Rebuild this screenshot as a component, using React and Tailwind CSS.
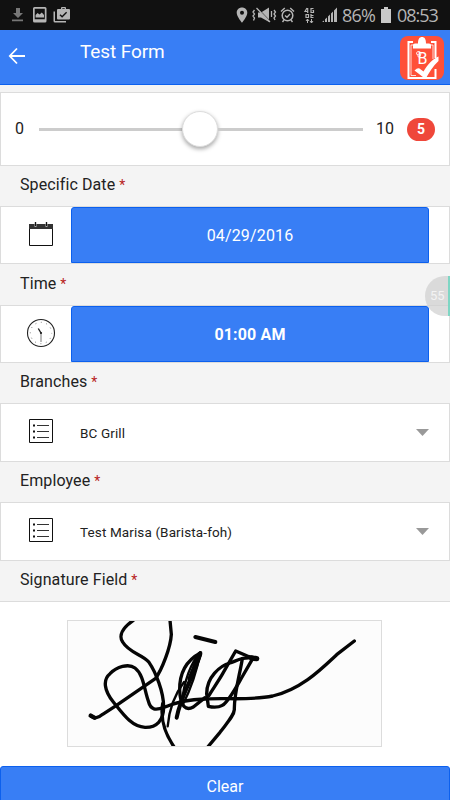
// src/App.jsx
import { useState } from "react";

function StatusBar() {
  return (
    <div className="flex h-[30px] items-center bg-[#111111] pl-3 pr-[10px] text-[#b5b5b5]">
      <svg width="60" height="16" viewBox="0 0 60 16" fill="currentColor">
        <path d="M4 1h4v5h3L6 11L1 6h3z M0 12.5h11v1.700H0z" fill="#777" />
        <path fillRule="evenodd" d="M22.500 0h10.500q1.500 0 1.500 1.500v12.500q0 1.500-1.500 1.500h-10.500q-1.500 0-1.500-1.500v-12.500q0-1.500 1.500-1.500z M22.700 1.700v10.600h10.100v-10.600z" />
        <path d="M23.600 10.500V8l2-2 2 1.500 2.200-2 2.200 2.500v2.500z" />
        <path d="M43 4.500v9.500h11v1.500h-11q-1.500 0-1.500-1.500v-9.500z" />
        <path fillRule="evenodd" d="M49 2V1q0-1 1-1h3q1 0 1 1v1h3q1 0 1 1v8.500q0 1-1 1h-11q-1 0-1-1V3q0-1 1-1z M50.300 1.300v.7h2.400v-.7z M48.500 7.200l-1 1 2.600 2.500 5-5-1-1-4 4z" />
      </svg>
      <svg className="ml-auto" width="106" height="18" viewBox="0 0 106 18" fill="none" stroke="currentColor">
        <path fill="currentColor" stroke="none" fillRule="evenodd" d="M6 1.500c3 0 5.300 2.200 5.300 5.200 0 3.800-5.300 10-5.300 10S.7 10.500.7 6.700C.7 3.700 3 1.500 6 1.500z M6 4.700a2 2 0 1 0 0 4 2 2 0 0 0 0-4z" />
        <path fill="currentColor" stroke="none" d="M22 6.500h3l8-5v14.500l-8-4.500h-3z" />
        <path stroke="#111111" strokeWidth="1.200" d="M22 3l13 13.500" />
        <path strokeWidth="1.300" d="M20.500 2l13.500 14M18.500 4l-1.500 2 1.500 2-1.500 2 1.500 2-1 2.500M35.500 5v6M38 4l1.500 2-1.500 2 1.500 2-1.500 2 1 2" />
        <circle cx="51.500" cy="9.500" r="5.300" strokeWidth="1.500" />
        <path strokeWidth="1.400" d="M45 5.500l3.800-3.600M54.200 1.900l3.800 3.600M49 9.500l2 1.800 3-3.200M48 14l-1.500 2M55 14l1.500 2" />
        <path strokeWidth="1.200" d="M71 2l-2 3.500h3M71.700 2v5M77.500 2.500h-2.500v4h2.500v-2h-1M70 8v3.500h3M75 8v3.500h2.500M75 9.500h2.500M70 8.500h2.500v3" />
        <path strokeWidth="1" d="M71.500 13v4M70 15l1.500-2 1.500 2M75.500 13v4M74 15l1.500 2 1.500-2" />
        <path fill="currentColor" stroke="none" d="M86 16L88 14.500V16z M89 13.200l2-1.700V16h-2z M92 10.500l2-2V16h-2z M95 7.500l2-2V16h-2z M98 4.500l3-3V16h-3z" />
      </svg>
      <span className="w-[37px] whitespace-nowrap font-['Open_Sans',sans-serif] text-[18px] tracking-[-0.8px]">86%</span>
      <svg className="ml-[2px] mr-[6px]" width="10" height="16" viewBox="0 0 10 16" fill="#c8c8c8">
        <path d="M3 0h4v2h3v14H0V2h3z" />
      </svg>
      <span className="w-[43px] whitespace-nowrap font-['Open_Sans',sans-serif] text-[18px] tracking-[-1px]">08:53</span>
    </div>
  );
}

function AppLogo() {
  return (
    <svg width="44" height="44" viewBox="0 0 44 44">
      <rect width="44" height="44" rx="8" fill="#ff5038" />
      <path d="M13 6H8.500v36H35.500V33M31 6h4.500v16" fill="none" stroke="#fff" strokeWidth="2" />
      <path d="M14 9h-3v30.500h5M30 9h3v14" fill="none" stroke="#fff" strokeWidth=".8" />
      <path d="M13 12.500V9q0-1.500 2-1.500h3C18 3 19.500 1 22 1s4 2 4 6.500h3q2 0 2 1.500v3.500z" fill="#fff" />
      <text x="17.500" y="28" fill="#fff" fontSize="16" fontFamily="Roboto, sans-serif">B</text>
      <path d="M19 19q-3 0-2.500-2t3-1.500 1 4-3 0" fill="none" stroke="#fff" strokeWidth=".9" />
      <path d="M14.500 34.500q3-3 5-2l4 3C28 28 33 22.500 38.500 20.500V25C33 30 29 36.500 25.500 43z" fill="#fff" />
    </svg>
  );
}

function CalendarIcon() {
  return (
    <svg width="26" height="26" viewBox="0 0 26 26">
      <path d="M1.500 3.500h23v21h-23z" fill="none" stroke="#111" />
      <path d="M1 3h24v5H1z" fill="#333" />
      <path d="M7.500 1v5M18.500 1v5" stroke="#aaa" strokeWidth="2" />
      <path d="M7.500 1v4M18.500 1v4" stroke="#111" />
    </svg>
  );
}

function ClockIcon() {
  return (
    <svg width="30" height="30" viewBox="0 0 30 30" fill="none" stroke="#222">
      <circle cx="15" cy="15" r="13.500" strokeWidth="1.100" />
      <circle cx="15" cy="15" r="10.700" stroke="#777" strokeWidth="1" strokeDasharray="1 4.602" strokeDashoffset=".5" />
      <path d="M15 15l-2.700-4.500" strokeWidth="1.400" />
      <path d="M15 15v9" stroke="#777" />
      <circle cx="15" cy="15" r=".7" fill="#222" />
    </svg>
  );
}

function ListIcon() {
  return (
    <svg width="26" height="26" viewBox="0 0 26 26" stroke="#111" fill="none">
      <path d="M1.500 1.500h23v23h-23z" />
      <path d="M9 7.500h12M9 13.500h12M9 19.500h12" stroke="#333" />
      <path d="M5 7.500h2M5 13.500h2M5 19.500h2" strokeWidth="2" />
    </svg>
  );
}

function Signature() {
  return (
    <svg width="313" height="126" viewBox="24 32 939 378" fill="none" stroke="#050505" strokeWidth="10" strokeLinecap="round" strokeLinejoin="round">
      <path d="M220 30C188 52 175 76 188 95C207 128 250 133 267 156C287 185 311 245 311 290C311 330 290 352 255 351C215 350 188 310 160 275C132 240 128 208 150 190C170 170 205 158 225 173C251 193 252 235 265 272C272 300 287 300 313 291C345 277 390 267 435 266C500 262 570 271 638 257C725 236 785 175 830 133L883 92" />
      <path d="M92 315C102 327 115 323 128 312L165 288L286 205C306 178 332 110 334 72L330 30" />
      <path d="M92 316L103 322" strokeWidth="13" />
      <path d="M308 280C298 340 325 385 345 414" />
      <path d="M440 414L480 366C505 333 522 315 523 298C522 250 540 190 547 145" />
      <path d="M406 80L466 95" strokeWidth="12" />
      {/* letter i */}
      <path d="M421 128C380 150 358 190 359 240C361 290 378 302 400 290L435 262" />
      <path d="M323 348C328 290 344 252 372 215" strokeWidth="7" />
      <path d="M421 128C405 195 365 245 350 322" strokeWidth="12" />
      <path d="M420 130C392 155 372 215 366 275M420 130C410 185 390 240 368 284" strokeWidth="7" />
      <path d="M419 132L390 205" strokeWidth="15" />
      {/* last letter */}
      <path d="M590 145C545 136 526 154 510 158C480 166 440 200 440 250L445 288C466 293 478 290 487 285C505 276 532 224 548 197L575 150" />
      <path d="M447 255C458 237 473 215 485 195L527 122L562 137L590 145" />
      <path d="M575 143L590 145" strokeWidth="16" />
    </svg>
  );
}

function FieldLabel({ children }) {
  return (
    <div className="flex h-[40px] items-center bg-[#f4f4f4] pb-[2px] pl-5 text-[16px] tracking-[0.1px] text-[#222]">
      {children}
      <span className="ml-[4px] text-[14px] text-[#b81d22]">*</span>
    </div>
  );
}

function SelectRow({ value }) {
  return (
    <div className="flex h-[59px] items-center border border-[#dcdcdc] bg-white pl-[27px] pr-5">
      <div className="mb-[3px]"><ListIcon /></div>
      <span className="ml-[26px] mt-[1px] text-[13.5px] tracking-[0.12px] text-[#222]">{value}</span>
      <svg className="ml-auto" width="13" height="7" viewBox="0 0 13 7">
        <path d="M0 0h13L6.500 7z" fill="#999" />
      </svg>
    </div>
  );
}

function PickerRow({ icon, children }) {
  return (
    <div className="flex h-[58px] border border-[#dcdcdc] bg-white pr-5">
      <div className="flex w-[70px] items-center justify-center pb-[3px] pl-[9px]">{icon}</div>
      <button className="flex-1 rounded-t-[3px] border border-[#0c60ee] bg-[#387ef5] pt-[2px] text-[16px] tracking-[0.15px] text-white">{children}</button>
    </div>
  );
}

export default function App() {
  const [value] = useState(5);
  const [date] = useState("04/29/2016");
  const [time] = useState("01:00 AM");

  return (
    <div className="relative h-[800px] w-[450px] overflow-hidden bg-[#f4f4f4] font-['Roboto',sans-serif]">
      <StatusBar />

      <header className="flex h-[55px] border-b border-[#0c60ee] bg-[#387ef5] text-white">
        <svg className="ml-2 mt-[17px]" width="18" height="18" viewBox="0 0 18 18" fill="none" stroke="#fff" strokeWidth="1.800">
          <path d="M9 1.500L1.800 9L9 16.500M1.800 9H17" />
        </svg>
        <h1 className="ml-[54px] mt-[8px] text-[19px] leading-7 tracking-[-0.1px]">Test Form</h1>
        <div className="ml-auto mr-[6px] mt-[6px]"><AppLogo /></div>
      </header>

      {/* Slider */}
      <div className="mt-[7px] flex h-[74px] items-center border border-[#dcdcdc] bg-white text-[16px] text-[#222]">
        <span className="ml-[14px] w-[24px]">0</span>
        <div className="flex h-[36px] w-[324px] items-center">
          <div className="h-[3px] w-[143px] bg-[#ccc]" />
          <div className="h-[36px] w-[36px] rounded-full border border-[#ddd] bg-white shadow-[0_2px_4px_rgba(0,0,0,0.35)]" />
          <div className="h-[3px] flex-1 bg-[#ccc]" />
        </div>
        <span className="ml-[13px] w-[31px]">10</span>
        <span className="flex h-[23px] w-[28px] items-center justify-center rounded-full bg-[#ef473a] text-[14px] font-bold text-white">{value}</span>
      </div>

      <FieldLabel>Specific Date</FieldLabel>
      <PickerRow icon={<CalendarIcon />}>{date}</PickerRow>

      <div className="pt-px">
        <FieldLabel>Time</FieldLabel>
      </div>
      <PickerRow icon={<ClockIcon />}><b>{time}</b></PickerRow>

      <FieldLabel>Branches</FieldLabel>
      <SelectRow value="BC Grill" />

      <FieldLabel>Employee</FieldLabel>
      <SelectRow value="Test Marisa (Barista-foh)" />

      <FieldLabel>Signature Field</FieldLabel>

      {/* Signature pad */}
      <div className="h-[200px] border-t border-[#dcdcdc] bg-white">
        <div className="ml-[67px] mt-[18px] h-[127px] w-[315px] overflow-hidden border border-[#dcdcdc] bg-[#fcfcfc]">
          <Signature />
        </div>
        <button className="mt-[19px] h-[52px] w-full rounded-[3px] border border-[#0c60ee] bg-[#387ef5] pb-[11px] text-[16px] text-white">Clear</button>
      </div>

      {/* Floating bubble over the right edge */}
      <div className="absolute right-0 top-[276px] flex h-[40px] w-[25px] items-center overflow-hidden rounded-l-full border-r-2 border-[#7fd6c4] bg-[#cfcfcf]/70 pl-[5px] text-[13px] text-white/70">
        55
      </div>
    </div>
  );
}
